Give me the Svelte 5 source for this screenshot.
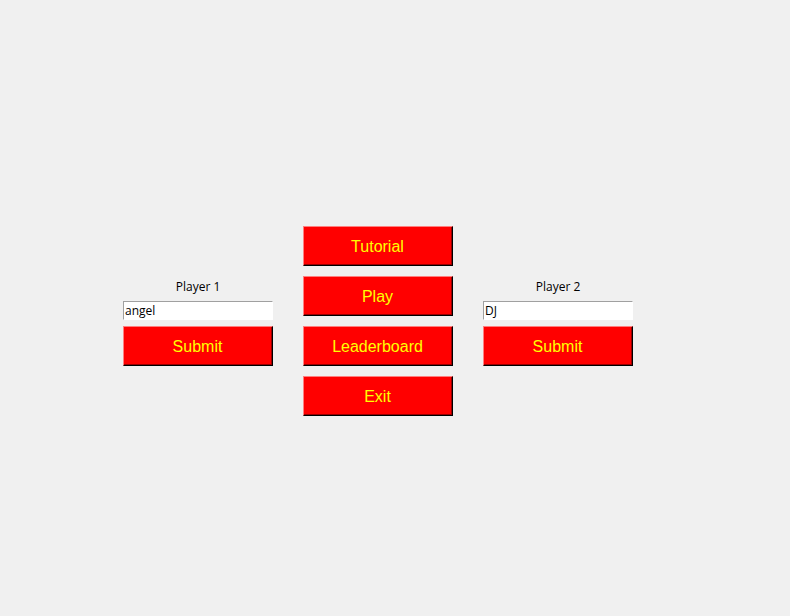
<script>
  let players = $state([
    { id: 'player-1', label: 'Player 1', name: 'angel' },
    { id: 'player-2', label: 'Player 2', name: 'DJ' }
  ]);
  const menu = ['Tutorial', 'Play', 'Leaderboard', 'Exit'];
</script>

{#snippet playerForm(player)}
  <form class="player" onsubmit={(e) => e.preventDefault()}>
    <label for={player.id}>{player.label}</label>
    <input id={player.id} type="text" bind:value={player.name} autocomplete="off" spellcheck="false" />
    <button type="submit">Submit</button>
  </form>
{/snippet}

<main>
  <div class="board">
    {@render playerForm(players[0])}
    <nav class="menu" aria-label="Game menu">
      {#each menu as item}
        <button type="button">{item}</button>
      {/each}
    </nav>
    {@render playerForm(players[1])}
  </div>
</main>

<style>
  :global(body) {
    background: #f0f0f0;
  }

  main {
    box-sizing: border-box;
    min-height: 100vh;
    display: flex;
    align-items: center;
    justify-content: center;
    padding: 26px 34px 0 0;
  }

  .board {
    display: grid;
    grid-template-columns: repeat(3, 150px);
    align-items: end;
    gap: 30px;
  }

  .menu {
    display: flex;
    flex-direction: column;
    gap: 10px;
  }

  .player {
    display: flex;
    flex-direction: column;
    gap: 6px;
    margin-bottom: 50px;
  }

  label,
  input {
    font-family: 'Open Sans', 'Noto Sans', sans-serif;
    font-size: 12px;
    line-height: 16px;
    color: #000;
  }

  label {
    text-align: center;
  }

  input {
    box-sizing: border-box;
    width: 100%;
    height: 19px;
    margin: 0;
    padding: 0 1px 1px;
    border: 1px solid;
    border-color: #a0a0a0 #fff #fff #a0a0a0;
    border-radius: 0;
    background: #fff;
    outline: none;
  }

  button {
    box-sizing: border-box;
    width: 100%;
    height: 40px;
    margin: 0;
    padding: 1px 1px 0 0;
    border: 1px solid;
    border-color: #ff7f7f #000 #000 #ff7f7f;
    border-radius: 0;
    background: #f00;
    box-shadow: inset -1px -1px #990000;
    color: #ff0;
    font-family: 'Liberation Sans', Arial, sans-serif;
    font-size: 16px;
    line-height: 20px;
  }
</style>
